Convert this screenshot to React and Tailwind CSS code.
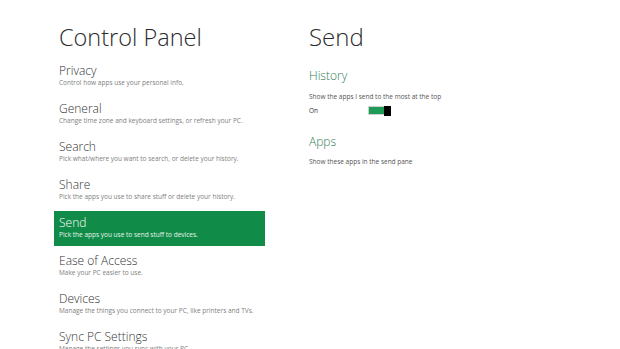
const items = [
    { title: "Privacy", desc: "Control how apps use your personal info." },
    { title: "General", desc: "Change time zone and keyboard settings, or refresh your PC." },
    { title: "Search", desc: "Pick what/where you want to search, or delete your history." },
    { title: "Share", desc: "Pick the apps you use to share stuff or delete your history." },
    { title: "Send", desc: "Pick the apps you use to send stuff to devices.", active: true },
    { title: "Ease of Access", desc: "Make your PC easier to use." },
    { title: "Devices", desc: "Manage the things you connect to your PC, like printers and TVs." },
    { title: "Sync PC Settings", desc: "Manage the settings you sync with your PC." },
];

function MenuItem({ title, desc, active }) {
    return (
        <div
            className={
                "h-[35px] mb-[3px] pl-[5px] pt-[4px] " +
                (active ? "bg-[#118c48] text-white" : "text-[#333333]")
            }
        >
            <div className="text-[12px] leading-[15px] font-light whitespace-nowrap">
                {title}
            </div>
            <div
                className={
                    "text-[6.5px] leading-[9px] whitespace-nowrap " +
                    (active ? "text-[#e6f4ec]" : "text-[#808080]")
                }
            >
                {desc}
            </div>
        </div>
    );
}

export default function App() {
    return (
        <div
            className="w-[620px] h-[349px] overflow-hidden bg-white flex"
            style={{ fontFamily: '"Open Sans", "Noto Sans", sans-serif' }}
        >
            <div className="ml-[54px] w-[211px] pt-[21px] shrink-0">
                <h1 className="pl-[5px] text-[23.5px] leading-[32px] font-light text-[#2b2b2b] whitespace-nowrap">
                    Control Panel
                </h1>

                <div className="mt-[6px]">
                    {items.map((item) => (
                        <MenuItem key={item.title} {...item} />
                    ))}
                </div>
            </div>

            <div className="ml-[44px] pt-[21px]">
                <h1 className="text-[24px] leading-[32px] font-light text-[#2b2b2b]">
                    Send
                </h1>

                <h2 className="mt-[14px] text-[12px] leading-[17px] font-light text-[#2f7d55]">
                    History
                </h2>
                <div className="mt-[8px] text-[6.5px] leading-[9px] text-[#555555] whitespace-nowrap">
                    Show the apps I send to the most at the top
                </div>

                <div className="mt-[3px] h-[12px] flex items-center">
                    <span className="w-[59px] text-[6.5px] leading-[9px] text-[#333333]">
                        On
                    </span>
                    <div className="relative w-[23px] h-[9px] border border-[#cfcfcf] bg-[#1c9c57]">
                        <div className="absolute right-[-1px] top-[-1px] w-[7px] h-[10px] bg-black" />
                    </div>
                </div>

                <h2 className="mt-[17px] text-[12px] leading-[17px] font-light text-[#2f7d55]">
                    Apps
                </h2>
                <div className="mt-[7px] text-[6.5px] leading-[9px] text-[#555555] whitespace-nowrap">
                    Show these apps in the send pane
                </div>
            </div>
        </div>
    );
}
